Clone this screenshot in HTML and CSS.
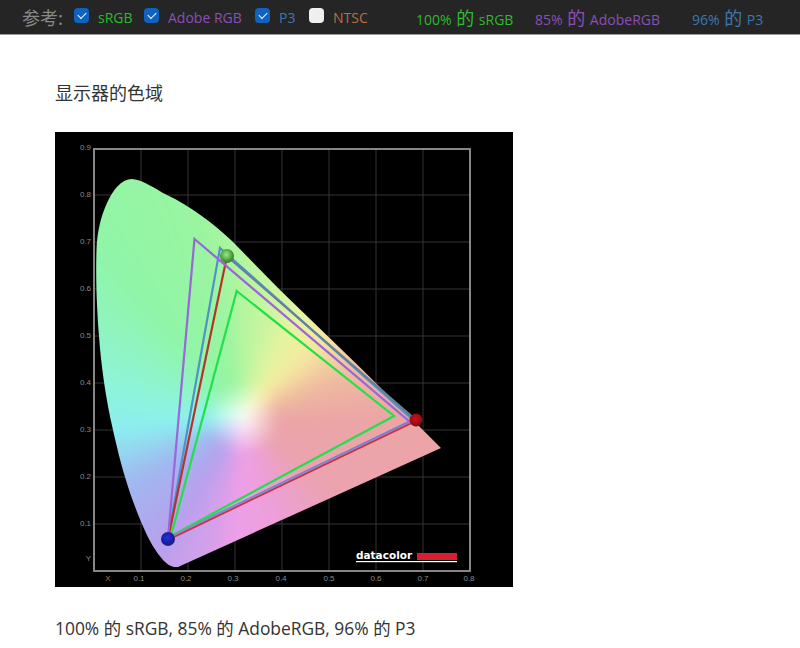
FILE: index.html
```html
<!DOCTYPE html>
<html lang="zh-CN">
<head>
    <meta charset="UTF-8">
    <title>显示器的色域</title>
    <link rel="stylesheet" href="styles.css">
</head>
<body>
    <header class="topbar">
        <span class="ref-label">参考:</span>
        <label class="ref-item item-srgb"><input type="checkbox" checked><span class="green">sRGB</span></label>
        <label class="ref-item item-adobe"><input type="checkbox" checked><span class="purple">Adobe RGB</span></label>
        <label class="ref-item item-p3"><input type="checkbox" checked><span class="blue">P3</span></label>
        <label class="ref-item item-ntsc"><input type="checkbox"><span class="orange">NTSC</span></label>
        <span class="stat stat-srgb green">100% <b>的</b> sRGB</span>
        <span class="stat stat-adobe purple">85% <b>的</b> AdobeRGB</span>
        <span class="stat stat-p3 blue">96% <b>的</b> P3</span>
    </header>

    <main class="content">
        <p class="title">显示器的色域</p>

        <!-- coordinates in the viewBox are the same as page pixels -->
        <svg class="chart" viewBox="55 132 458 455" xmlns="http://www.w3.org/2000/svg">
            <defs>
                <radialGradient id="ballGreen" cx="0.45" cy="0.4" r="0.6">
                    <stop offset="0" stop-color="#9fe88a"/>
                    <stop offset="0.7" stop-color="#4a9f3c"/>
                    <stop offset="1" stop-color="#4a6a48"/>
                </radialGradient>
                <radialGradient id="ballRed" cx="0.45" cy="0.4" r="0.6">
                    <stop offset="0" stop-color="#c8101c"/>
                    <stop offset="0.75" stop-color="#980c14"/>
                    <stop offset="1" stop-color="#5a1418"/>
                </radialGradient>
                <radialGradient id="ballBlue" cx="0.45" cy="0.4" r="0.6">
                    <stop offset="0" stop-color="#2230e8"/>
                    <stop offset="0.75" stop-color="#141c98"/>
                    <stop offset="1" stop-color="#2c2c55"/>
                </radialGradient>
                <clipPath id="gamut">
                    <path d="M178 567 L441 448 L361.7 369 L280 290 L233 242 C212 222 190 206 167 195 C155 189 144 180 132 179 C121 179 113 190 107 203 C101 216 97 232 96.5 250 C95.5 280 97 310 99 336 C101 365 106 400 113 430 C117 448 121 464 125 477 C130 494 136 510 142 524 C149 541 156 552 163 560 C168 565 172 567 175 567 Z"/>
                </clipPath>
            </defs>

            <rect x="55" y="132" width="458" height="455" fill="#000"/>

            <g class="grid">
                <path d="M141 149V571M188 149V571M235 149V571M282 149V571M329 149V571M376 149V571M423 149V571"/>
                <path d="M94 195H470M94 242H470M94 289H470M94 336H470M94 383H470M94 430H470M94 477H470M94 524H470"/>
            </g>
            <rect class="frame" x="94" y="149" width="376" height="422"/>

            <g class="axis-y">
                <text x="91" y="150">0.9</text>
                <text x="91" y="197">0.8</text>
                <text x="91" y="244">0.7</text>
                <text x="91" y="291">0.6</text>
                <text x="91" y="338">0.5</text>
                <text x="91" y="385">0.4</text>
                <text x="91" y="432">0.3</text>
                <text x="91" y="479">0.2</text>
                <text x="91" y="526">0.1</text>
                <text x="91" y="561">Y</text>
            </g>
            <g class="axis-x">
                <text x="108" y="581">X</text>
                <text x="139" y="581">0.1</text>
                <text x="186" y="581">0.2</text>
                <text x="233" y="581">0.3</text>
                <text x="281" y="581">0.4</text>
                <text x="329" y="581">0.5</text>
                <text x="376" y="581">0.6</text>
                <text x="423" y="581">0.7</text>
                <text x="469" y="581">0.8</text>
            </g>

            <g clip-path="url(#gamut)">
                <foreignObject x="55" y="132" width="458" height="455">
                    <div xmlns="http://www.w3.org/1999/xhtml" class="gamut-fill"></div>
                </foreignObject>
            </g>

            <g class="gamut-lines">
                <polygon points="220,248 413,420 168,538" stroke="#4f93c8"/>
                <path d="M227 256 L168 539" stroke="#b8322c"/>
                <polygon points="194.5,239 410,422 168,538" stroke="#9a66d8"/>
                <polygon points="236.7,291 394,416 171,536" stroke="#22e04a"/>
                <path d="M229 258 L416 420" stroke="#66809a"/>
                <path d="M412 422 L172 536" stroke="#7f90c8"/>
                <path d="M416 421 L172 538" class="thin" stroke="#d8283c"/>
            </g>

            <circle cx="227" cy="256" r="7" fill="url(#ballGreen)"/>
            <circle cx="416" cy="420" r="6.5" fill="url(#ballRed)"/>
            <circle cx="168" cy="539" r="7" fill="url(#ballBlue)"/>

            <text class="logo-text" x="356" y="559">datacolor</text>
            <rect x="417" y="553" width="40" height="7" fill="#d81f30"/>
            <rect x="356" y="561" width="101" height="1.2" fill="#fff"/>
        </svg>

        <p class="caption">100% 的 sRGB, 85% 的 AdobeRGB, 96% 的 P3</p>
    </main>
</body>
</html>
```

FILE: styles.css
```css
* {
    margin: 0;
    padding: 0;
    box-sizing: border-box;
}

html, body {
    background-color: #fff;
}

body {
    font-family: 'Open Sans', 'Noto Sans CJK SC', sans-serif;
    color: #333;
    overflow: hidden;
}

.topbar {
    height: 35px;
    background-color: #252525;
    border-bottom: 1px solid #999;
    display: flex;
    align-items: center;
    padding-left: 22px;
    font-size: 14px;
    white-space: nowrap;
}

.ref-label {
    color: #888;
    font-size: 18px;
    font-family: 'Noto Sans CJK SC', sans-serif;
    width: 52px;
}

.ref-item {
    display: flex;
    align-items: center;
}

.ref-item input {
    appearance: none;
    width: 15px;
    height: 15px;
    margin-right: 9px;
    margin-bottom: 4px;
    border-radius: 4px;
    background-color: #efefef;
    position: relative;
}

.ref-item input:checked {
    background-color: #0f62c0;
}

.ref-item input:checked::after {
    content: "";
    position: absolute;
    left: 4px;
    top: 4px;
    width: 7px;
    height: 4px;
    border-left: 1.5px solid #fff;
    border-bottom: 1.5px solid #fff;
    transform: rotate(-45deg);
}

.item-srgb { width: 70px; }
.item-adobe { width: 111px; }
.item-p3 { width: 54px; }
.item-ntsc { width: 107px; }

.stat b {
    font-weight: normal;
    font-size: 18px;
    font-family: 'Noto Sans CJK SC', sans-serif;
    margin: 0 1px;
}

.stat-srgb { width: 119px; }
.stat-adobe { width: 157px; }

.green { color: #2dba2d; }
.purple { color: #8a4fb8; }
.blue { color: #3b78ae; }
.orange { color: #b96f40; }

.content {
    padding-left: 55px;
}

.title {
    font-size: 18px;
    line-height: 28px;
    margin-top: 44px;
    margin-bottom: 25px;
}

.chart {
    display: block;
    width: 458px;
    height: 455px;
}

.caption {
    font-size: 17.4px;
    line-height: 28px;
    margin-top: 27px;
}

/* hue runs round the white point at 243,418 of the page */
.gamut-fill {
    width: 458px;
    height: 455px;
    filter: blur(6px);
    background:
        radial-gradient(circle at 188px 286px, rgba(255, 255, 255, 0.95), rgba(255, 255, 255, 0) 36px),
        conic-gradient(from 0deg at 188px 286px,
            #b4f5a0 0deg,
            #e6f4a0 28deg,
            #f5e8a0 45deg,
            #efbaa0 68deg,
            #eba5a5 90deg,
            #eba3b0 130deg,
            #ec9fd8 160deg,
            #ee9fe6 182deg,
            #b8a0ee 212deg,
            #a0b8f0 240deg,
            #8ceef0 265deg,
            #8ef4d8 285deg,
            #90f5a8 320deg,
            #9af5a0 348deg,
            #b4f5a0 360deg);
}

.grid path {
    fill: none;
    stroke: #343434;
    stroke-width: 1;
}

.frame {
    fill: none;
    stroke: #959595;
    stroke-width: 1.8;
}

.axis-y text,
.axis-x text {
    fill: #8a8a8a;
    font-family: 'Liberation Sans', sans-serif;
    font-size: 8px;
}

.axis-y text {
    text-anchor: end;
}

.axis-x text {
    text-anchor: middle;
}

.gamut-lines polygon,
.gamut-lines path {
    fill: none;
    stroke-width: 2.2;
}

.gamut-lines .thin {
    stroke-width: 1.6;
}

.logo-text {
    fill: #fff;
    font-family: 'DejaVu Sans', sans-serif;
    font-weight: bold;
    font-size: 10.5px;
}
```
